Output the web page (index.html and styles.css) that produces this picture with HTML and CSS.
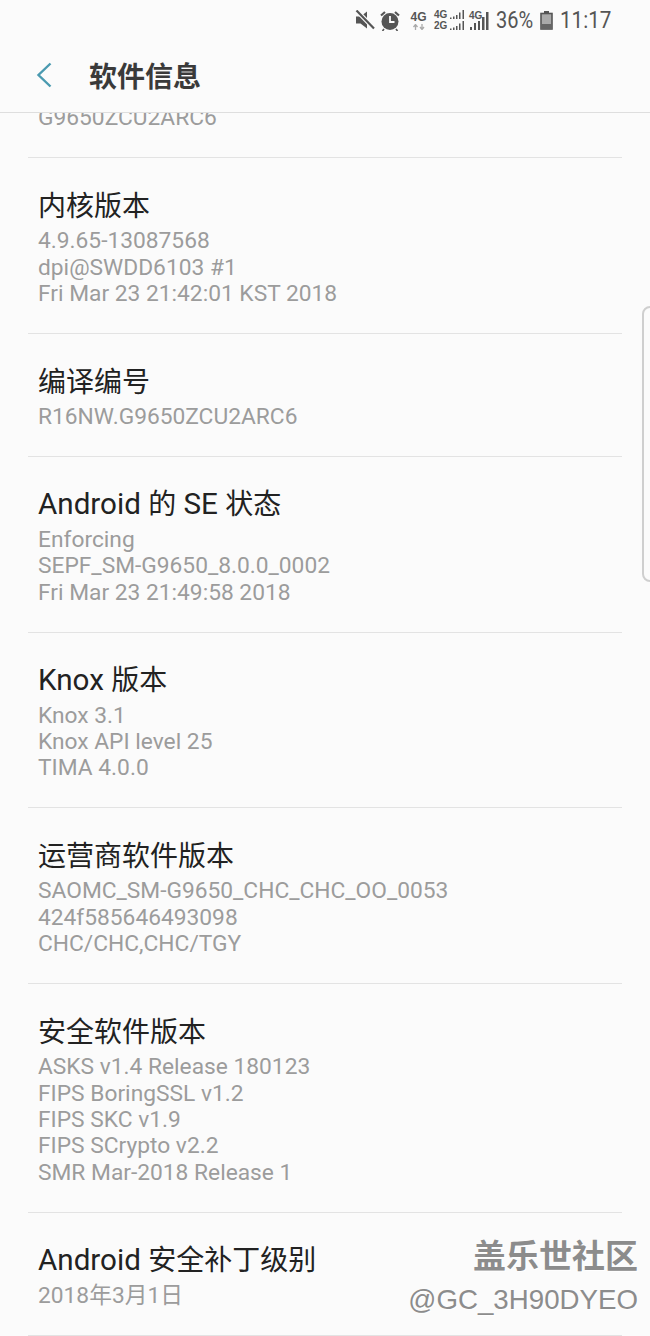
FILE: index.html
```html
<!DOCTYPE html>
<html lang="en">

<head>
    <meta charset="UTF-8">
    <meta name="viewport" content="width=device-width, initial-scale=1.0">
    <title>软件信息</title>
    <link rel="stylesheet" href="styles.css">
</head>

<body>

    <div class="top">
        <div class="status">
            <!-- muted speaker -->
            <svg class="mute" width="20" height="20" viewBox="0 0 20 20">
                <path d="M1 6.500h4.500L12 1.500v17l-6.500-5H1z" fill="#555" />
                <path d="M2 1l16.500 17" stroke="#fbfbfb" stroke-width="4.500" />
                <path d="M1.500 .5l17.500 18" stroke="#555" stroke-width="2.200" />
            </svg>
            <!-- alarm -->
            <svg class="alarm" width="20" height="21" viewBox="0 0 20 21">
                <circle cx="10" cy="11.500" r="8.500" fill="#555" />
                <path d="M10 6v6h4.500" fill="none" stroke="#fbfbfb" stroke-width="1.800" />
                <path d="M1 5.500L5 2M19 5.500L15 2" stroke="#555" stroke-width="2.200" />
                <path d="M4 19l-1.500 2M16 19l1.500 2" stroke="#555" stroke-width="1.600" />
            </svg>
            <div class="net">
                <span>4G</span>
                <svg width="14" height="6" viewBox="0 0 14 6">
                    <path d="M3.500 6V1M1.500 3l2-2.500 2 2.500" fill="none" stroke="#aaa" stroke-width="1.300" />
                    <path d="M10 0v5M8 3l2 2.500 2-2.500" fill="none" stroke="#aaa" stroke-width="1.300" />
                </svg>
            </div>
            <div class="dual">
                <div class="dual-row"><span>4G</span>
                    <svg width="15" height="9" viewBox="0 0 15 9">
                        <path d="M0 7.500h1.500V9H0zM3 6.500h1.500V9H3zM6 5h1.500v4H6zM9 2.500h1.500V9H9zM12.500 0H14v9h-1.500z" fill="#555" />
                    </svg>
                </div>
                <div class="dual-row"><span>2G</span>
                    <svg width="15" height="9" viewBox="0 0 15 9">
                        <path d="M0 7.500h1.500V9H0zM3 6.500h1.500V9H3zM6 5h1.500v4H6zM9 2.500h1.500V9H9zM12.500 0H14v9h-1.500z" fill="#555" />
                    </svg>
                </div>
            </div>
            <div class="sig">
                <span>4G</span>
                <svg width="20" height="18" viewBox="0 0 20 18">
                    <path d="M1 15h2v3H1zM5 11h2v7H5zM9 9h2v9H9zM13 5h2.500v13H13zM17 0h2.500v18H17z" fill="#555" />
                </svg>
            </div>
            <span class="pct">36%</span>
            <svg class="batt" width="13" height="19" viewBox="0 0 13 19">
                <path d="M4 0h5v2H4z" fill="#555" />
                <rect x="1" y="2.500" width="11" height="15.500" fill="#aaa" stroke="#555" stroke-width="1.600" />
                <rect x="1" y="13" width="11" height="5" fill="#666" />
            </svg>
            <span class="clock">11:17</span>
        </div>
        <div class="bar">
            <svg class="back" width="18" height="28" viewBox="0 0 18 28">
                <path d="M15.500 2.500L3.500 14l12 11.500" fill="none" stroke="#4a9ab0" stroke-width="2.400" />
            </svg>
            <h1>软件信息</h1>
        </div>
    </div>

    <div class="list">
        <div class="row cut">
            <div class="sub">G9650ZCU2ARC6</div>
        </div>
        <div class="row">
            <div class="name">内核版本</div>
            <div class="sub">4.9.65-13087568</div>
            <div class="sub">dpi@SWDD6103 #1</div>
            <div class="sub">Fri Mar 23 21:42:01 KST 2018</div>
        </div>
        <div class="row">
            <div class="name">编译编号</div>
            <div class="sub">R16NW.G9650ZCU2ARC6</div>
        </div>
        <div class="row">
            <div class="name mixed"><span class="lat">Android </span>的<span class="lat"> SE </span>状态</div>
            <div class="sub">Enforcing</div>
            <div class="sub">SEPF_SM-G9650_8.0.0_0002</div>
            <div class="sub">Fri Mar 23 21:49:58 2018</div>
        </div>
        <div class="row">
            <div class="name mixed"><span class="lat">Knox </span>版本</div>
            <div class="sub">Knox 3.1</div>
            <div class="sub">Knox API level 25</div>
            <div class="sub">TIMA 4.0.0</div>
        </div>
        <div class="row">
            <div class="name">运营商软件版本</div>
            <div class="sub">SAOMC_SM-G9650_CHC_CHC_OO_0053</div>
            <div class="sub">424f585646493098</div>
            <div class="sub">CHC/CHC,CHC/TGY</div>
        </div>
        <div class="row">
            <div class="name">安全软件版本</div>
            <div class="sub">ASKS v1.4 Release 180123</div>
            <div class="sub">FIPS BoringSSL v1.2</div>
            <div class="sub">FIPS SKC v1.9</div>
            <div class="sub">FIPS SCrypto v2.2</div>
            <div class="sub">SMR Mar-2018 Release 1</div>
        </div>
        <div class="row">
            <div class="name mixed"><span class="lat">Android </span>安全补丁级别</div>
            <div class="sub">2018年3月1日</div>
        </div>
    </div>

    <div class="scroll-edge"></div>

    <div class="mark">
        <div class="mark-cn">盖乐世社区</div>
        <div class="mark-id">@GC_3H90DYEO</div>
    </div>

</body>

</html>
```

FILE: styles.css
```css
html,
body {
    margin: 0;
    height: 1336px;
    overflow: hidden;
}

body {
    position: relative;
    background-color: #fbfbfb;
    font-family: Roboto, "Noto Sans CJK SC", sans-serif;
    color: #333;
}

.top {
    position: relative;
    z-index: 2;
    height: 112px;
    background: #fbfbfb;
    border-bottom: 1px solid #dedede;
}

.status {
    height: 40px;
    padding-right: 40px;
    display: flex;
    justify-content: flex-end;
    align-items: center;
    color: #555;
}

.mute {
    margin-right: 5px;
}

.alarm {
    margin-right: 10px;
}

.net,
.dual,
.sig {
    font-family: "Liberation Sans", sans-serif;
    font-weight: bold;
}

.net {
    width: 17px;
    margin-right: 7px;
    display: flex;
    flex-direction: column;
    align-items: center;
    font-size: 12px;
    line-height: 13px;
}

.dual {
    width: 31px;
    display: flex;
    flex-direction: column;
    gap: 2px;
    margin-right: 4px;
    font-size: 10px;
    line-height: 9px;
}

.dual-row {
    display: flex;
    justify-content: space-between;
    align-items: flex-end;
}

.sig {
    position: relative;
    width: 20px;
    height: 20px;
    font-size: 10px;
    line-height: 10px;
}

.sig span {
    position: absolute;
    left: 0;
    top: 1px;
}

.sig svg {
    position: absolute;
    right: 0;
    top: 2px;
}

/* the phone's status font is narrower than Roboto */
.pct,
.clock {
    display: block;
    transform-origin: left center;
    white-space: nowrap;
}

.pct {
    width: 37px;
    margin-left: 7px;
    font-size: 23px;
    transform: scaleX(.87);
}

.batt {
    margin: 0 7px;
}

.clock {
    width: 50px;
    font-size: 24px;
    transform: scaleX(.86);
}

.bar {
    height: 70px;
    display: flex;
    align-items: center;
}

.back {
    margin-left: 35px;
}

h1 {
    margin: 0 0 0 36px;
    font-size: 28px;
    font-weight: bold;
    color: #3a3a3a;
}

.list {
    margin: 0 28px;
}

.row {
    padding: 32px 10px 25.6px;
    border-bottom: 1px solid #e3e3e3;
}

.row.cut {
    height: 44.2px;
    padding-top: 0;
    padding-bottom: 0;
    overflow: hidden;
}

.row.cut .sub {
    margin-top: -8px;
}

.name {
    height: 34px;
    line-height: 34px;
    margin-bottom: 4px;
    font-size: 28px;
    color: #222;
}

/* rows with latin text sit a little higher */
.name.mixed {
    margin-top: -2px;
    margin-bottom: 6px;
}

.lat {
    font-size: 29.6px;
}

.sub {
    height: 26.4px;
    line-height: 26.4px;
    font-size: 22.75px;
    color: #9c9c9c;
}

.scroll-edge {
    position: absolute;
    top: 306px;
    right: -8px;
    width: 12px;
    height: 272px;
    border: 2px solid #cfcfcf;
    border-radius: 8px;
}

.mark {
    position: absolute;
    right: 12px;
    top: 1238px;
    text-align: right;
    color: #8c8c8c;
}

.mark-cn {
    font-size: 33px;
    line-height: 38px;
    font-weight: bold;
    text-shadow: 1px 1px 0 #fff;
}

.mark-id {
    margin-top: 4px;
    font-family: "Liberation Sans", sans-serif;
    font-size: 27.7px;
    line-height: 40px;
    text-shadow: 1px 1px 0 #fff;
}
```
